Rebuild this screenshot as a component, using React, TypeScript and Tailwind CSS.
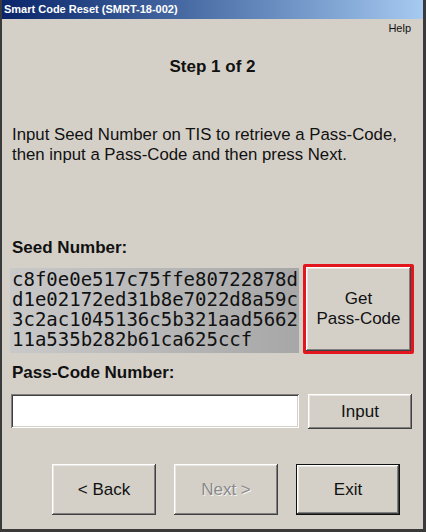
const raised =
  "bg-[#d4d0c8] shadow-[inset_-1px_-1px_#404040,inset_1px_1px_#ffffff,inset_-2px_-2px_#808080,inset_2px_2px_#e8e6e1]";

const seedLines = [
  "c8f0e0e517c75ffe80722878d",
  "d1e02172ed31b8e7022d8a59c",
  "3c2ac1045136c5b321aad5662",
  "11a535b282b61ca625ccf",
];

function WinButton({
  label,
  disabled,
  isDefault,
}: {
  label: string;
  disabled?: boolean;
  isDefault?: boolean;
}) {
  return (
    <button
      className={`flex h-[51px] w-[104px] items-center justify-center text-[17px] ${raised} ${
        isDefault ? "border border-[#111]" : ""
      } ${disabled ? "text-[#8a8a8a] [text-shadow:1px_1px_#f4f4f4]" : "text-[#111]"}`}
    >
      {label}
    </button>
  );
}

export default function App() {
  return (
    <div className="flex h-[532px] w-[426px] flex-col border-b-[3px] border-l-2 border-r-[3px] border-[#3a3a3a] bg-[#d4d0c8] font-['Liberation_Sans',Arial,sans-serif] text-[#111]">
      {/* title bar */}
      <div className="h-[19px] bg-gradient-to-r from-[#0a246a] to-[#a6caf0] pl-[2px] text-[11px] font-bold leading-[19px] text-white">
        Smart Code Reset (SMRT-18-002)
      </div>

      <div className="flex flex-1 flex-col px-[8px]">
        <div className="mt-[3px] flex justify-end pr-[4px] text-[11px] leading-[13px]">Help</div>

        <h1 className="mt-[22px] text-center text-[17px] font-bold leading-[20px]">Step 1 of 2</h1>

        <p className="mt-[48px] pl-[2px] text-[16.8px] leading-[20px]">
          Input Seed Number on TIS to retrieve a Pass-Code,
          <br />
          then input a Pass-Code and then press Next.
        </p>

        <div className="mt-[73px] pl-[2px] text-[17px] font-bold leading-[20px]">Seed Number:</div>

        <div className="mt-[6px] flex items-start">
          <div className="mt-[4px] w-[289px] bg-gradient-to-r from-[#c9c9c9] to-[#a7a7a7] pb-[4px] pl-[2px] pt-[1px] font-['DejaVu_Sans_Mono',monospace] text-[19px] leading-[20px]">
            {seedLines.map((l) => (
              <div key={l}>{l}</div>
            ))}
          </div>
          <div className="ml-[4px] h-[90px] w-[111px] rounded-[2px] border-[3px] border-[#e3161d]">
            <button className={`flex h-full w-full flex-col items-center justify-center text-[17px] leading-[20px] ${raised}`}>
              <span>Get</span>
              <span>Pass-Code</span>
            </button>
          </div>
        </div>

        <div className="mt-[9px] pl-[2px] text-[17px] font-bold leading-[20px]">Pass-Code Number:</div>

        <div className="mt-[11px] flex items-start">
          <input
            className="ml-[1px] h-[34px] w-[288px] bg-white px-[4px] text-[17px] outline-none shadow-[inset_1px_1px_#808080,inset_-1px_-1px_#ffffff,inset_2px_2px_#404040,inset_-2px_-2px_#d4d0c8]"
            defaultValue=""
          />
          <button className={`ml-[9px] flex h-[35px] w-[104px] items-center justify-center text-[17px] ${raised}`}>
            Input
          </button>
        </div>

        <div className="mt-[35px] flex gap-[18px] pl-[42px]">
          <WinButton label="< Back" />
          <WinButton label="Next >" disabled />
          <WinButton label="Exit" isDefault />
        </div>
      </div>
    </div>
  );
}
